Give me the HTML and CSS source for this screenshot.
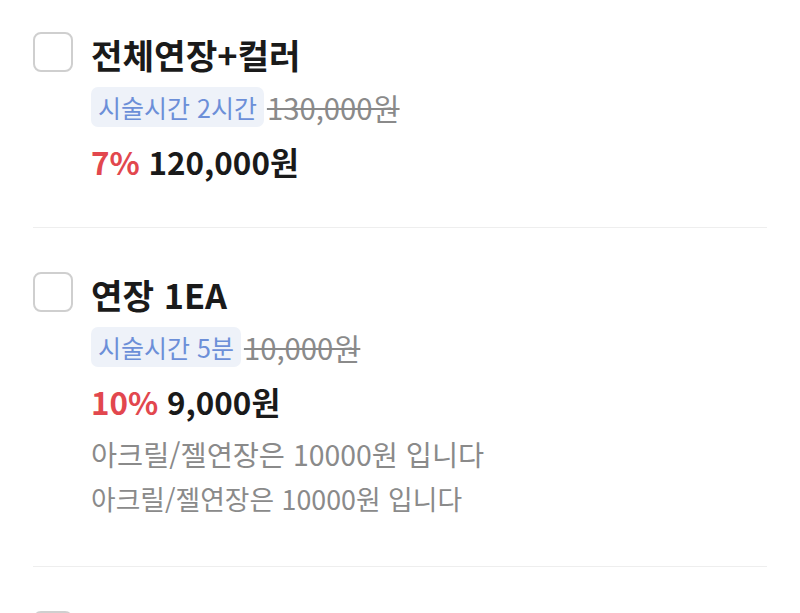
FILE: index.html
```html
<!DOCTYPE html>
<html lang="ko">
<head>
<meta charset="utf-8">
<link rel="stylesheet" href="styles.css">
</head>
<body>
<div class="list">
  <div class="item">
    <span class="check"></span>
    <div class="content">
      <div class="title">전체연장+컬러</div>
      <div class="meta"><span class="tag">시술시간 2시간</span><span class="orig">130,000원</span></div>
      <div class="price"><span class="rate">7%</span> 120,000원</div>
    </div>
  </div>
  <div class="item">
    <span class="check"></span>
    <div class="content">
      <div class="title">연장 1EA</div>
      <div class="meta"><span class="tag">시술시간 5분</span><span class="orig">10,000원</span></div>
      <div class="price"><span class="rate">10%</span> 9,000원</div>
      <div class="notes">
        <div class="note">아크릴/젤연장은 10000원 입니다</div>
        <div class="note note-sm">아크릴/젤연장은 10000원 입니다</div>
      </div>
    </div>
  </div>
  <div class="item">
    <span class="check"></span>
    <div class="content">
      <div class="title">&nbsp;</div>
    </div>
  </div>
</div>
</body>
</html>
```
FILE: styles.css
```css
html, body {
  margin: 0;
  padding: 0;
  background: #fff;
  overflow: hidden;
}
body {
  font-family: "Noto Sans CJK KR", "Noto Sans", sans-serif;
  color: #1a1a1a;
}
.list {
  margin: -12px 33px 0;
}
.item {
  display: flex;
  gap: 18px;
  padding: 44px 0 45px;
  border-bottom: 1.5px solid #eeeeee;
}
.check {
  flex: none;
  width: 40px;
  height: 40px;
  box-sizing: border-box;
  border: 2px solid #cfcfcf;
  border-radius: 8px;
  background: #fff;
}
.content {
  display: flex;
  flex-direction: column;
  align-items: flex-start;
}
.title {
  font-size: 34.3px;
  font-weight: 700;
  line-height: 40px;
  padding-top: 2px;
  margin-bottom: -2px;
}
.meta {
  margin-top: 15px;
  display: flex;
  align-items: center;
  height: 40px;
}
.tag {
  display: inline-flex;
  align-items: center;
  height: 40px;
  padding: 0 7px;
  border-radius: 7px;
  background: #eef2f9;
  color: #6c8fd8;
  font-size: 25px;
}
.orig {
  margin-left: 3px;
  color: #8a8a8a;
  font-size: 29.3px;
  text-decoration: line-through;
  text-decoration-thickness: 2px;
}
.price {
  margin-top: 15px;
  line-height: 40px;
  font-size: 31.4px;
  font-weight: 700;
}
.rate {
  color: #e2474e;
}
.notes {
  margin-top: 9px;
}
.note {
  line-height: 46px;
  font-size: 28.4px;
  color: #8a8a8a;
}
.note-sm {
  font-size: 26.8px;
  line-height: 44px;
}
```
